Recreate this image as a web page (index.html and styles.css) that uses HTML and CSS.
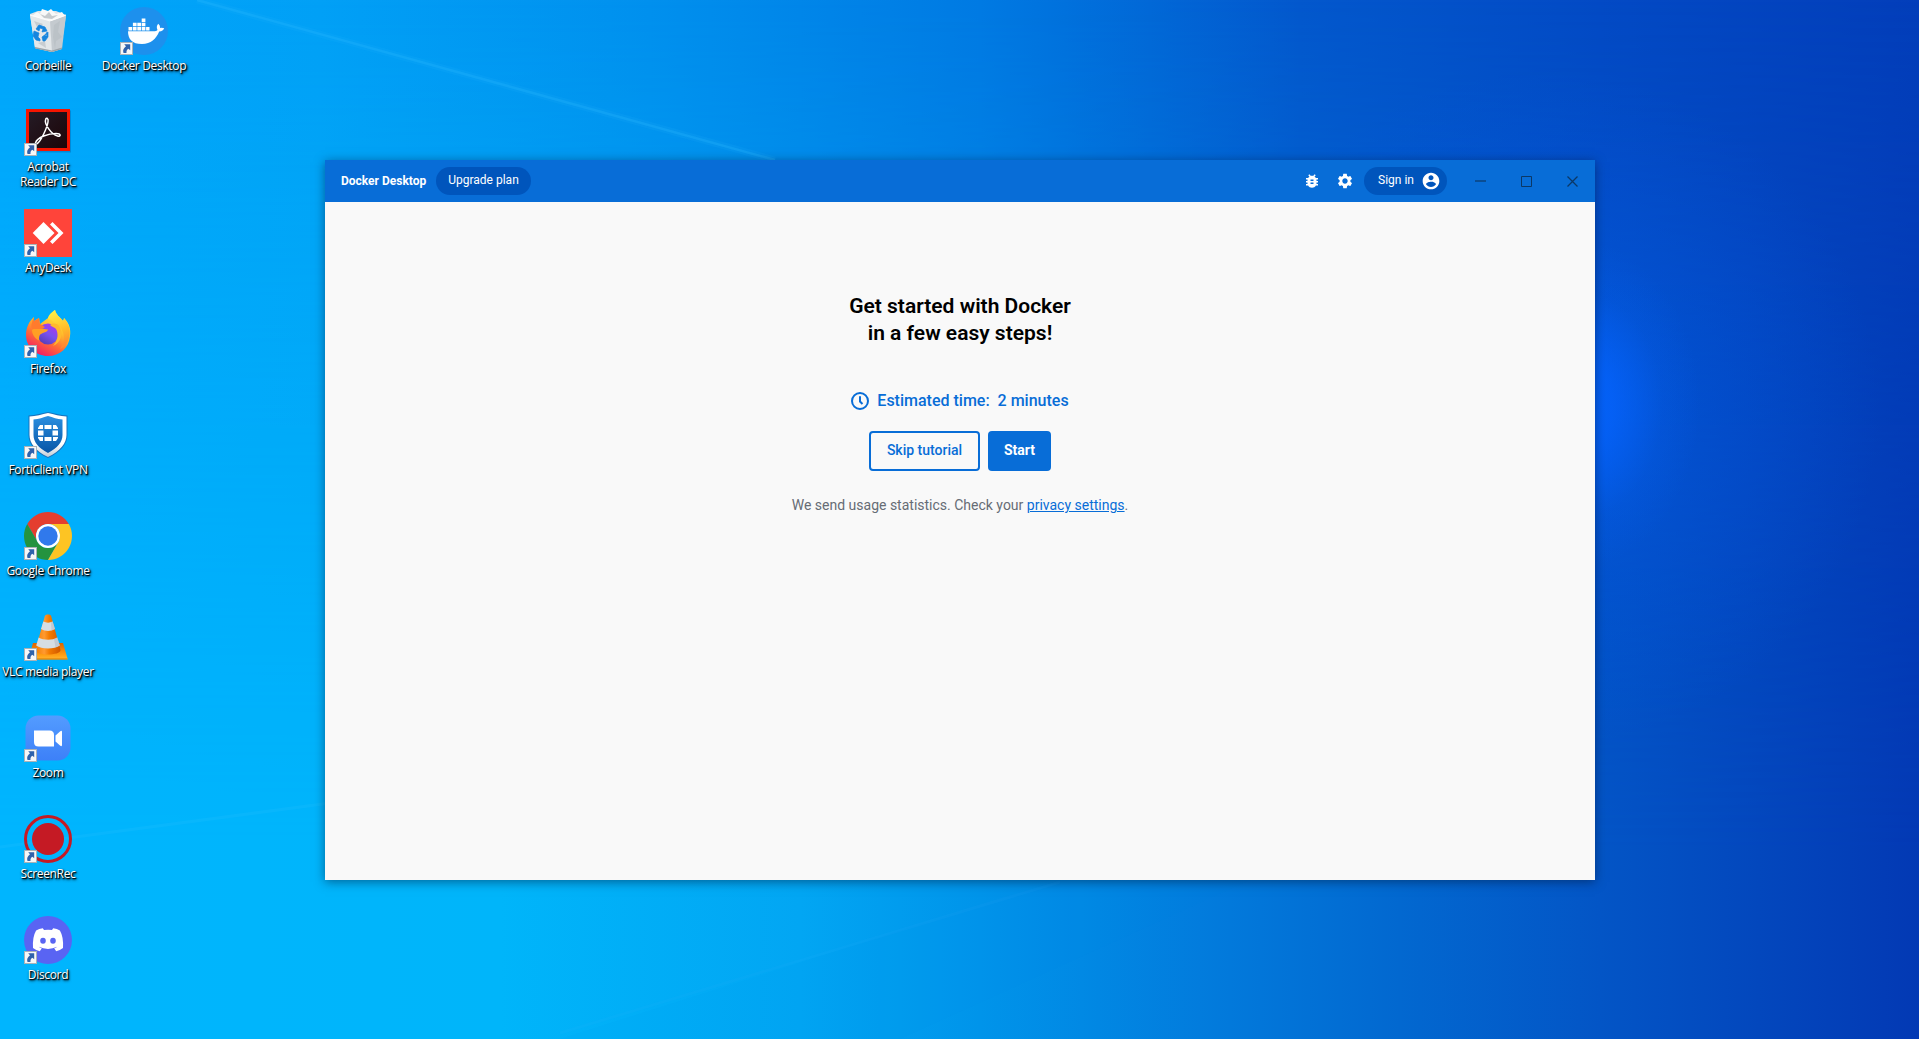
FILE: index.html
```html
<!DOCTYPE html>
<html lang="fr">
<head>
<meta charset="utf-8">
<title>Docker Desktop</title>
<link rel="stylesheet" href="styles.css">
</head>
<body>
<svg class="defs" width="0" height="0" aria-hidden="true">
  <defs>
    <symbol id="shortcut" viewBox="0 0 13 13">
      <rect x=".5" y=".5" width="12" height="12" fill="#f7f7f7" stroke="#aab2b8"/>
      <path d="M4.2 2.3h6v6L8.400 6.700C6.700 7.800 6.300 9 6.500 10.900H3.500C2.500 8.300 3.700 6 6 4.300z" fill="#2f62ab"/>
    </symbol>
  </defs>
</svg>
<div class="desktop">
  <div class="glow"></div>
  <svg class="rays" viewBox="0 0 1919 1039" aria-hidden="true">
    <path d="M197 0 775 160" stroke="#30bcff" stroke-width="7" opacity=".1"/>
    <path d="M197 0 775 160" stroke="#30bcff" stroke-width="2.500" opacity=".25"/>
    <path d="M0 847 330 803" stroke="#50ccff" stroke-width="3" opacity=".1"/>
    <path d="M1060 880 560 1039H900L1250 880z" fill="#0084ea" opacity=".05"/>
    <path d="M1060 882 560 1033" stroke="#40b8ff" stroke-width="3" opacity=".08"/>
  </svg>

  <div class="icons">
    <div class="item">
      <svg class="icon" viewBox="0 0 48 48">
        <path d="M6 7 14 4 32 4 42 8 37 42 28 45 11 41z" fill="#dfe3e6"/>
        <path d="M6 8 26 14 28 45 11 41z" fill="#e3e7e9"/>
        <path d="M26 14 42 8 38 42 28 45z" fill="#c4cacf"/>
        <path d="M30 18 36 14 34 25 38 30 32 34 31 42 29 30zM10 14 19 17 14 22zM14 36 21 34 22 41z" fill="#b5bcc2" opacity=".6"/>
        <path d="M8 9 13 5 16 7 18 2 24 4 27 2 32 7 38 5 41 9 27 14z" fill="#f7f8f8"/>
        <path d="M16 7 21 9 25 5 28 9 34 8 28 12 20 11z" fill="#c5cacd"/>
        <path d="M6 8 26 14 42 8" fill="none" stroke="#fff" stroke-width=".8"/>
        <path d="M12 22 15 18 21 20 23 24 18 25 19 22 16 21 15 24zM10 24 15 26 14 30 16 32 16 34 12 33 9 29zM18 30 22 27 21 29 23 29 22 26 24 25 24 30 21 34 19 34z" fill="#1585de" stroke="#1585de" stroke-width=".7"/>
        <path d="M11 40 28 43.500 38 40.500V42L28 45 11 41.500z" fill="#9ba3a8"/>
      </svg>
      <span class="label">Corbeille</span>
    </div>
    <div class="item">
      <svg class="icon" viewBox="0 0 48 48">
        <defs><linearGradient id="acro" x2="1" y2="1"><stop stop-color="#241b25"/><stop offset="1" stop-color="#1d0508"/></linearGradient></defs>
        <path d="M3 2.500h44v42H3z" fill="#006bb5" opacity=".5"/>
        <rect x="2" y="1" width="44" height="42" fill="#f61500"/>
        <rect x="5" y="4" width="38" height="36" fill="url(#acro)"/>
        <path d="M11.500 35C13 29 25 25.500 32 25.500c5.500 0 5 3.500 1.500 2.500C27 26.500 20.500 16 21.500 12c.7-3.200 3.300-2 2.500 2C23 20 17 33 13.500 35.300c-1 .7-2 .5-2-.3z" fill="none" stroke="#fff" stroke-width="1.500"/>
      </svg>
      <svg class="badge"><use href="#shortcut"/></svg>
      <span class="label">Acrobat<br>Reader DC</span>
    </div>
    <div class="item">
      <svg class="icon" viewBox="0 0 48 48">
        <path d="M0 0h48v48H0z" fill="#ff443a"/>
        <path d="M8.700 24 19.500 13 30.500 24 19.500 35z" fill="#fff"/>
        <path d="M26 15.500 28.500 13 39.500 24 28.500 35 26 32.500 34.500 24z" fill="#fff"/>
      </svg>
      <svg class="badge"><use href="#shortcut"/></svg>
      <span class="label">AnyDesk</span>
    </div>
    <div class="item">
      <svg class="icon" viewBox="0 0 48 48">
        <defs>
          <linearGradient id="ff" x1=".8" y1=".1" x2=".3" y2="1"><stop stop-color="#fff04a"/><stop offset=".35" stop-color="#ffbd2b"/><stop offset=".65" stop-color="#ff6b36"/><stop offset="1" stop-color="#f01868"/></linearGradient>
          <linearGradient id="ffp" x1=".8" x2=".2" y2="1"><stop stop-color="#b035ee"/><stop offset=".5" stop-color="#7951ef"/><stop offset="1" stop-color="#523cb0"/></linearGradient>
          <linearGradient id="fft" x2=".2" y2="1"><stop stop-color="#fff64d"/><stop offset=".6" stop-color="#ffbd28"/><stop offset="1" stop-color="#ff8a30"/></linearGradient>
        </defs>
        <path d="M24 8C26 4 29 2 31 0c1 5 5 7 8 11 1-1 1-2 1-3 5 5 7 11 6 18C45 38 36 46 24 46S2 37 2 25C2 18 5 11 10 7v4l5-3 1 6z" fill="url(#ff)"/>
        <path d="M24 9c0-4 4-7 7-9 1 5 5 7 8 11l1-3c5 6 7 12 5 20-2 6-5 9-9 11 5-7 5-16 0-22-3-4-8-7-12-8z" fill="url(#fft)"/>
        <circle cx="24" cy="24" r="10.500" fill="url(#ffp)"/>
        <path d="M8 20c5-4 11-1 16-.5 0 2-4 3-6 4-3 1-3 4-3 7-4-2-7-6-7-10.500z" fill="#ff9f24"/>
        <path d="M8 19C6 15 9 10 10 7v4l5-3 1 6 5 3-3 2z" fill="#ff7b2d"/>
        <path d="M26 15c4-3 8-1 9 1 5 7 2 17-6 20 6-7 5-13 3-17-2-2-4-2-6-4z" fill="#ffb92d"/>
      </svg>
      <svg class="badge"><use href="#shortcut"/></svg>
      <span class="label">Firefox</span>
    </div>
    <div class="item">
      <svg class="icon" viewBox="0 0 48 48">
        <defs><linearGradient id="fort" y2="1" x2="0"><stop stop-color="#2a8fe0"/><stop offset="1" stop-color="#0755a6"/></linearGradient>
        <linearGradient id="fortw" y2="1" x2="0"><stop stop-color="#fff"/><stop offset=".7" stop-color="#fff"/><stop offset="1" stop-color="#c2ccd6"/></linearGradient></defs>
        <path d="M24 1C30 2 36 4 43.500 4.500V24c0 9-7 17-19.500 23C11 41 4.500 33 4.500 24V4.500C12 4 18 2 24 1z" fill="#1772bd"/>
        <path d="M24 2C30 3.500 36 5 42.500 5.500V24c0 8-6 16-18.500 22C11.500 40 5.500 32 5.500 24V5.500C12 5 18 3.500 24 2z" fill="url(#fortw)"/>
        <path d="M24 5C29 6.500 33 8 38.500 8.500V24c0 7-5 13-14.500 18C14.500 37 9.500 31 9.500 24V8.500C15 8 19 6.500 24 5z" fill="url(#fort)"/>
        <path d="M17 14h-1l-2 3v1h5v-4zM20.500 14h7v4h-7zM29 14v4h5v-1l-2-3zM14 19.500h5.500v5H14zM28.500 19.500H34v5h-5.500zM14 26h5v4h-3l-2-3zM20.500 26h7v4h-7zM29 26h5v1l-2 3h-3z" fill="#fff"/>
      </svg>
      <svg class="badge"><use href="#shortcut"/></svg>
      <span class="label">FortiClient VPN</span>
    </div>
    <div class="item">
      <svg class="icon" viewBox="0 0 48 48">
        <path d="M3.220 12A24 24 0 0 1 44.780 12H24a12 12 0 0 0-10.390 18z" fill="#e43e2f"/>
        <path d="M3.220 12A24 24 0 0 0 24 48L34.390 30A12 12 0 0 1 13.610 30z" fill="#24933f"/>
        <path d="M24 48A24 24 0 0 0 44.780 12H24a12 12 0 0 1 10.390 18z" fill="#fdc423"/>
        <circle cx="24" cy="24" r="12" fill="#fff"/><circle cx="24" cy="24" r="9.700" fill="#3079ec"/>
      </svg>
      <svg class="badge"><use href="#shortcut"/></svg>
      <span class="label">Google Chrome</span>
    </div>
    <div class="item">
      <svg class="icon" viewBox="0 0 48 48">
        <defs><linearGradient id="vlc"><stop stop-color="#f57c00"/><stop offset=".35" stop-color="#ff9a30"/><stop offset=".55" stop-color="#f37b00"/><stop offset="1" stop-color="#cf5700"/></linearGradient>
        <linearGradient id="vlcb" x2="0" y2="1"><stop stop-color="#dc6300"/><stop offset=".7" stop-color="#ff9c12"/><stop offset="1" stop-color="#ffb62e"/></linearGradient></defs>
        <path d="M9 30h30l4.500 15.500v1H4.500v-1z" fill="url(#vlcb)"/>
        <path d="M21 2.500c1-1.500 5-1.500 6 0L36.500 37c0 6-25 6-25 0z" fill="url(#vlc)"/>
        <path d="M19.300 8.500c3 1.500 6.500 1.500 9.300 0l2.400 7.500c-4 2.500-10 2.500-14 0zM14.600 24.500c5 3 14 3 18.600 0l2.600 8c-5 4-18.500 4-23.600 0z" fill="#d6dde3"/>
        <path d="M27 9.300 28.600 8.500 31 16l-3.500 1.500zM30 26l3.200-1.500 2.600 8-4.300 2.100z" fill="#b5bdc6" opacity=".6"/>
        <path d="M4.500 45.500h39v1h-39z" fill="#d87800"/>
      </svg>
      <svg class="badge"><use href="#shortcut"/></svg>
      <span class="label">VLC media player</span>
    </div>
    <div class="item">
      <svg class="icon" viewBox="0 0 48 48">
        <defs><linearGradient id="zm" x2="0" y2="1"><stop stop-color="#539cff"/><stop offset="1" stop-color="#3d80f8"/></linearGradient></defs>
        <rect x="1.500" y="1.500" width="45" height="45" rx="13" fill="url(#zm)"/>
        <path d="M10 16.500h15.500q4.500 0 4.500 4.500v11.500H14.500q-4.500 0-4.500-4.500zM31.500 21.500 36 17.500q2-1.500 2 .5v13q0 2-2 .5l-4.500-4z" fill="#fff"/>
      </svg>
      <svg class="badge"><use href="#shortcut"/></svg>
      <span class="label">Zoom</span>
    </div>
    <div class="item">
      <svg class="icon" viewBox="0 0 48 48"><circle cx="24" cy="24" r="22.500" fill="none" stroke="#c51a24" stroke-width="3"/><circle cx="24" cy="24" r="16" fill="#c51a24"/></svg>
      <svg class="badge"><use href="#shortcut"/></svg>
      <span class="label">ScreenRec</span>
    </div>
    <div class="item">
      <svg class="icon" viewBox="0 0 48 48"><circle cx="24" cy="24" r="24" fill="#5964f3"/>
        <path d="M18.800 12.300 20 14q4-.6 8 0l1.200-1.700q3.800.6 6.700 2.200Q39.700 21 39 32q-3 2.300-6.800 3.300l-2-3q1.700-.5 3-1.500-9.200 4.200-18.400 0 1.300 1 3 1.500l-2 3Q12 34.300 9 32 8.300 21 12.100 14.500q2.900-1.600 6.700-2.200z" fill="#fff"/>
        <ellipse cx="19" cy="24.700" rx="2.800" ry="3" fill="#5964f3"/><ellipse cx="29" cy="24.700" rx="2.800" ry="3" fill="#5964f3"/>
      </svg>
      <svg class="badge"><use href="#shortcut"/></svg>
      <span class="label">Discord</span>
    </div>
    <div class="item">
      <svg class="icon" viewBox="0 0 48 48"><circle cx="24" cy="24" r="24" fill="#1d90ed"/>
        <path d="M8 24.200h27q2-.2 2.500-1.200-1.700-3.500.7-6.300 2 1.600 2 4.300 2-.6 4 .3-1 3-5 3.200C36 32 31 37 22 37 12 37 8 32 8 24.200z" fill="#fff"/>
        <path d="M8.500 20h3.700v3.500H8.500zM12.900 20h3.700v3.500h-3.700zM17.300 20H21v3.500h-3.700zM21.700 20h3.700v3.500h-3.700zM26.100 20h3.400v3.500h-3.400zM12.900 15.800h3.700v3.500h-3.700zM17.300 15.800H21v3.500h-3.700zM21.700 15.800h3.700v3.500h-3.700zM21.700 11.500h3.700V15h-3.700z" fill="#fff"/>
      </svg>
      <svg class="badge"><use href="#shortcut"/></svg>
      <span class="label">Docker Desktop</span>
    </div>
  </div>

  <main class="window">
    <header class="titlebar">
      <span class="title">Docker Desktop</span>
      <button class="pill upgrade">Upgrade plan</button>
      <div class="tools">
        <svg class="tool" viewBox="0 0 24 24"><path d="M20 8h-2.810c-.45-.78-1.070-1.450-1.820-1.960L17 4.410 15.590 3l-2.170 2.170C12.960 5.060 12.490 5 12 5c-.49 0-.96.060-1.410.170L8.410 3 7 4.410l1.620 1.630C7.880 6.550 7.260 7.220 6.810 8H4v2h2.090c-.05.33-.09.66-.09 1v1H4v2h2v1c0 .34.040.67.090 1H4v2h2.810c1.040 1.790 2.970 3 5.190 3s4.150-1.210 5.190-3H20v-2h-2.090c.05-.33.090-.66.090-1v-1h2v-2h-2v-1c0-.34-.04-.67-.09-1H20V8zm-6 8h-4v-2h4v2zm0-4h-4v-2h4v2z"/></svg>
        <svg class="tool" viewBox="0 0 24 24"><path d="M19.140 12.940c.04-.3.060-.61.060-.94 0-.32-.02-.64-.07-.94l2.030-1.580c.18-.14.230-.41.120-.61l-1.920-3.320c-.12-.22-.37-.29-.59-.22l-2.390.96c-.5-.38-1.030-.7-1.620-.94l-.36-2.540c-.04-.24-.24-.41-.48-.41h-3.840c-.24 0-.43.170-.47.410l-.36 2.540c-.59.240-1.130.57-1.620.94l-2.390-.96c-.22-.08-.47 0-.59.220L2.740 8.870c-.12.210-.08.470.12.610l2.030 1.580c-.05.3-.09.63-.09.940s.02.640.070.940l-2.030 1.580c-.18.140-.23.410-.12.610l1.920 3.320c.12.220.37.290.59.220l2.390-.96c.5.380 1.030.7 1.620.94l.36 2.540c.05.240.24.410.48.410h3.840c.24 0 .44-.17.470-.41l.36-2.540c.59-.24 1.130-.56 1.620-.94l2.390.96c.22.080.47 0 .59-.22l1.920-3.320c.12-.22.070-.47-.12-.61l-2.010-1.580zM12 15.600c-1.980 0-3.600-1.620-3.600-3.600s1.620-3.600 3.600-3.600 3.600 1.620 3.600 3.600-1.620 3.600-3.600 3.600z"/></svg>
      </div>
      <button class="pill signin"><span>Sign in</span>
        <svg class="account" viewBox="0 0 24 24"><path d="M12 2C6.480 2 2 6.480 2 12s4.480 10 10 10 10-4.480 10-10S17.520 2 12 2zm0 3c1.660 0 3 1.340 3 3s-1.340 3-3 3-3-1.340-3-3 1.340-3 3-3zm0 14.200c-2.500 0-4.710-1.280-6-3.220.03-1.990 4-3.080 6-3.080 1.990 0 5.970 1.090 6 3.080-1.290 1.940-3.500 3.220-6 3.220z" /></svg>
      </button>
      <div class="controls">
        <svg class="control" viewBox="0 0 12 12"><path d="M0 5h11" stroke-width="2" opacity=".6"/></svg>
        <svg class="control" viewBox="0 0 12 12"><path d="M.5.500h10v10H.5z"/></svg>
        <svg class="control" viewBox="0 0 12 12"><path d="M.5.500 10.500 10.500M10.500.500.500 10.500" stroke-width="1.250"/></svg>
      </div>
    </header>
    <section class="content">
      <h1>Get started with Docker<br>in a few easy steps!</h1>
      <div class="estimate">
        <svg class="clock" viewBox="0 0 18 18"><circle cx="9" cy="9" r="8"/><path d="M9 4.300V9.500L11.500 12"/></svg>
        <span class="estimate-text">Estimated time:</span><span class="estimate-text">2 minutes</span>
      </div>
      <div class="actions">
        <button class="btn outline">Skip tutorial</button>
        <button class="btn solid">Start</button>
      </div>
      <p class="note">We send usage statistics. Check your <a href="#">privacy settings</a>.</p>
    </section>
  </main>
</div>
</body>
</html>
```
FILE: styles.css
```css
* { box-sizing: border-box; }
body { margin: 0; font-family: Roboto, "Liberation Sans", sans-serif; }
button { font: inherit; border: 0; padding: 0; }
.defs { position: absolute; }

.desktop {
  position: relative;
  width: 1919px;
  height: 1039px;
  overflow: hidden;
  display: flex;
  background: linear-gradient(90deg, #00a6fb 0, #02a0f6 320px, #0190ee 650px, #007ae3 980px, #0268d7 1150px, #0358cd 1300px, #034ac5 1600px, #033eba 1919px);
}
.desktop::before {
  content: "";
  position: absolute;
  inset: 0;
  background: linear-gradient(90deg, #00b5fe 0, #00b5fa 500px, #02a6f3 800px, #0094ea 980px, #027cdd 1200px, #0268d0 1400px, #0355c6 1600px, #0339b4 1919px);
  -webkit-mask-image: linear-gradient(180deg, transparent 0, #000 850px);
  mask-image: linear-gradient(180deg, transparent 0, #000 850px);
}
.glow {
  position: absolute;
  inset: 0;
  background:
    radial-gradient(ellipse 125px 165px at 1575px 405px, rgba(5, 100, 255, .9) 0, rgba(5, 100, 255, .75) 30%, rgba(5, 96, 240, .22) 70%, rgba(5, 90, 230, 0) 100%),
    radial-gradient(ellipse 340px 340px at 1540px 410px, rgba(3, 88, 226, .65) 0, rgba(3, 84, 218, 0) 100%);
}
.rays { position: absolute; inset: 0; fill: none; }

.icons {
  position: absolute;
  inset: 0 auto 0 0;
  display: grid;
  grid-auto-flow: column;
  grid-template-rows: repeat(10, 101px);
  grid-auto-columns: 96px;
}
.item {
  position: relative;
  display: flex;
  flex-direction: column;
  align-items: center;
  padding-top: 7px;
}
.icon { width: 48px; height: 48px; flex: none; }
.badge { position: absolute; left: 24px; top: 42px; width: 13px; height: 13px; }
.label {
  margin-top: 3px;
  font: 12px/15px "Open Sans", "Noto Sans", sans-serif;
  letter-spacing: -.33px;
  color: #fff;
  text-align: center;
  white-space: nowrap;
  text-shadow: 1px 1px 1px #000, 1px 1px 2px rgba(0, 0, 0, .9), 1px 2px 3px rgba(0, 0, 0, .7);
}

.window {
  position: absolute;
  left: 325px;
  top: 160px;
  width: 1270px;
  height: 720px;
  display: flex;
  flex-direction: column;
  background: #f9f9f9;
  box-shadow: 0 2px 10px rgba(0, 20, 50, .5);
}
.titlebar {
  height: 42px;
  flex: none;
  display: flex;
  align-items: center;
  padding: 0 16px;
  background: #086dd7;
  color: #fff;
  font-size: 12px;
}
.title { width: 95px; font-weight: 700; white-space: nowrap; }
.pill {
  height: 28px;
  display: flex;
  align-items: center;
  border-radius: 14px;
  background: #0055bc;
  color: #fff;
}
.upgrade { width: 95px; justify-content: center; padding-bottom: 2px; }
.tools { margin-left: auto; display: flex; gap: 15px; }
.tool { width: 18px; height: 18px; fill: #fff; }
.signin { width: 83px; margin-left: 10px; padding: 0 6px 0 14px; justify-content: space-between; }
.signin span { padding-bottom: 2px; }
.account { width: 20px; height: 20px; fill: #fff; }
.controls { display: flex; gap: 34px; margin-left: 28px; padding-top: 2px; }
.control { width: 12px; height: 12px; fill: none; stroke: #0b3866; stroke-width: 1; }

.content { display: flex; flex-direction: column; align-items: center; }
h1 {
  margin: 91px 0 0;
  font-size: 21px;
  line-height: 27px;
  font-weight: 600;
  text-align: center;
  color: #000;
}
.estimate {
  display: flex;
  align-items: center;
  gap: 8px;
  margin-top: 42px;
  height: 24px;
  font-size: 16px;
  font-weight: 500;
  color: #086dd7;
}
.estimate-text { padding-bottom: 2px; }
.clock { width: 18px; height: 18px; fill: none; stroke: #086dd7; stroke-width: 2; }
.actions { display: flex; gap: 8px; margin-top: 18px; }
.btn { height: 40px; border-radius: 4px; font-size: 14px; padding-bottom: 2px; }
.outline { width: 111px; border: 2px solid #086dd7; background: transparent; color: #086dd7; font-weight: 500; }
.solid { width: 63px; background: #086dd7; color: #fff; font-weight: 700; }
.note { margin: 24px 0 0; font-size: 14px; line-height: 20px; color: #666c75; }
.note a { color: #086dd7; }
```
